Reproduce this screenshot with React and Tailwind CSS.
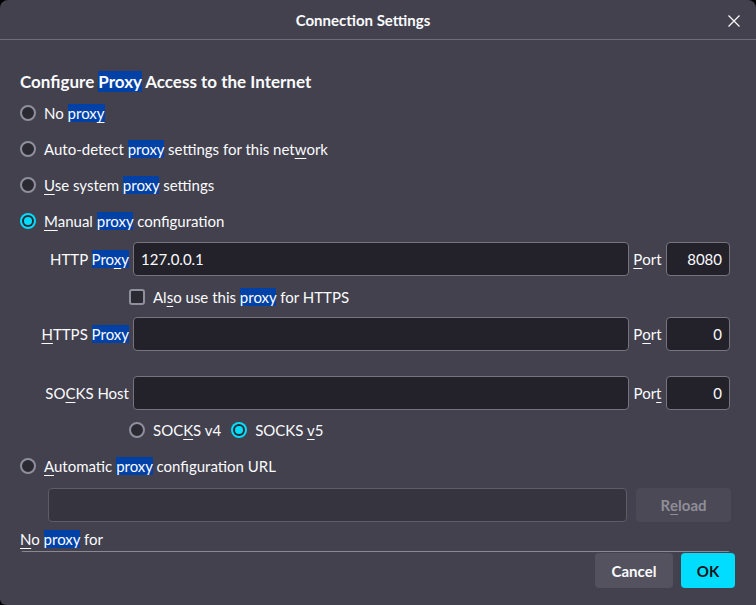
import React from "react";

const HL = ({ children }) => (
  <span className="bg-[#0041a8]">{children}</span>
);
const U = ({ children }) => <span className="underline underline-offset-[3px] decoration-1">{children}</span>;

function Radio({ checked }) {
  if (checked) {
    return (
      <div className="w-4 h-4 rounded-full bg-[#00ddff] flex items-center justify-center shrink-0">
        <div className="w-3 h-3 rounded-full bg-[#2b2a33] flex items-center justify-center">
          <div className="w-2 h-2 rounded-full bg-[#00ddff]" />
        </div>
      </div>
    );
  }
  return <div className="w-4 h-4 rounded-full border-2 border-[#8f8f9d] bg-[#2b2a33] shrink-0" />;
}

function RadioRow({ checked, children, h = "h-[36px]" }) {
  return (
    <div className={`flex items-center ${h}`}>
      <Radio checked={checked} />
      <span className="ml-[8px]">{children}</span>
    </div>
  );
}

function Input({ value, className = "" }) {
  return (
    <div className={`h-[34px] rounded-[4px] border border-[#76757f] bg-[#23222b] flex items-center px-[7px] ${className}`}>
      {value}
    </div>
  );
}

function ProxyRow({ label, value, port, portLabel }) {
  return (
    <div className="flex items-center h-[34px]">
      <div className="w-[113px] pr-[4px] text-right whitespace-nowrap">{label}</div>
      <Input value={value} className="w-[496px]" />
      <div className="w-[37px] flex justify-center">{portLabel}</div>
      <Input value={port} className="w-[64px] justify-end" />
    </div>
  );
}

export default function App() {
  return (
    <div className="w-[756px] h-[605px] bg-black overflow-hidden" style={{ fontFamily: "Lato, 'Noto Sans', sans-serif" }}>
      <div className="w-full h-full bg-[#42414d] rounded-t-[8px] rounded-bl-[6px] text-[#fbfbfe] text-[15px] leading-[18px] flex flex-col relative">
        <div className="h-[40px] border-b border-[#6f6e78] flex items-center justify-center relative shrink-0">
          <span className="font-bold text-[15px] -ml-[30px]">Connection Settings</span>
          <svg className="absolute left-[727px] top-[14px]" width="14" height="14" viewBox="0 0 14 14">
            <path d="M1.5 1.5 L12.5 12.5 M12.5 1.5 L1.5 12.5" stroke="#fbfbfe" strokeWidth="1.2" />
          </svg>
        </div>
        <div className="h-[512px] overflow-hidden px-[20px] pt-[29px] shrink-0">
          <div className="h-[24px] flex items-center font-bold text-[17px] leading-[21px]">
            <span>Configure <HL>Proxy</HL> Access to the Internet</span>
          </div>
          <div className="mt-[2px]">
            <RadioRow>No <HL>prox<U>y</U></HL></RadioRow>
            <RadioRow>Auto-detect <HL>proxy</HL> settings for this net<U>w</U>ork</RadioRow>
            <RadioRow><U>U</U>se system <HL>proxy</HL> settings</RadioRow>
            <RadioRow checked><U>M</U>anual <HL>proxy</HL> configuration</RadioRow>
          </div>
          <div className="mt-[3px]">
            <ProxyRow label={<>HTTP <HL>Pro<U>x</U>y</HL></>} value="127.0.0.1" port="8080" portLabel={<><U>P</U>ort</>} />
            <div className="h-[41px] flex items-center pl-[109px]">
              <div className="w-4 h-4 rounded-[3px] border-2 border-[#8f8f9d] bg-[#2b2a33] shrink-0" />
              <span className="ml-[8px]">Al<U>s</U>o use this <HL>proxy</HL> for HTTPS</span>
            </div>
            <ProxyRow label={<><U>H</U>TTPS <HL>Proxy</HL></>} value="" port="0" portLabel={<>P<U>o</U>rt</>} />
            <div className="h-[25px]" />
            <ProxyRow label={<>SO<U>C</U>KS Host</>} value="" port="0" portLabel={<>Por<U>t</U></>} />
            <div className="h-[40px] flex items-center pl-[109px]">
              <Radio />
              <span className="ml-[8px]">SOC<U>K</U>S v4</span>
              <div className="ml-[10px]"><Radio checked /></div>
              <span className="ml-[8px]">SOCKS <U>v</U>5</span>
            </div>
          </div>
          <RadioRow h="h-[32px]"><U>A</U>utomatic <HL>proxy</HL> configuration URL</RadioRow>
          <div className="mt-[6px] h-[34px] flex items-center pl-[28px]">
            <div className="w-[579px] h-[34px] rounded-[4px] border border-[#5d5c67] bg-[#36353f]" />
            <div className="ml-[9px] w-[95px] h-[34px] rounded-[4px] bg-[#4a4955] flex items-center justify-center font-bold text-[#8f8e98]">
              R<U>e</U>load
            </div>
          </div>
          <div className="mt-[6px] h-[22px] flex items-center">
            <span><U>N</U>o <HL>proxy</HL> for</span>
          </div>
          <div className="mt-[1px] w-[711px] h-[60px] rounded-[4px] border-t-2 border-x border-[#8a8993] bg-[#42414d]" />
        </div>
        <div className="flex-1 flex justify-end items-start pt-[1px] pr-[21px] gap-[8px]">
          <div className="w-[78px] h-[35px] rounded-[4px] bg-[#53525e] flex items-center justify-center font-bold">Cancel</div>
          <div className="w-[54px] h-[35px] rounded-[4px] bg-[#00ddff] flex items-center justify-center font-bold text-[#15141a]">OK</div>
        </div>
      </div>
    </div>
  );
}
